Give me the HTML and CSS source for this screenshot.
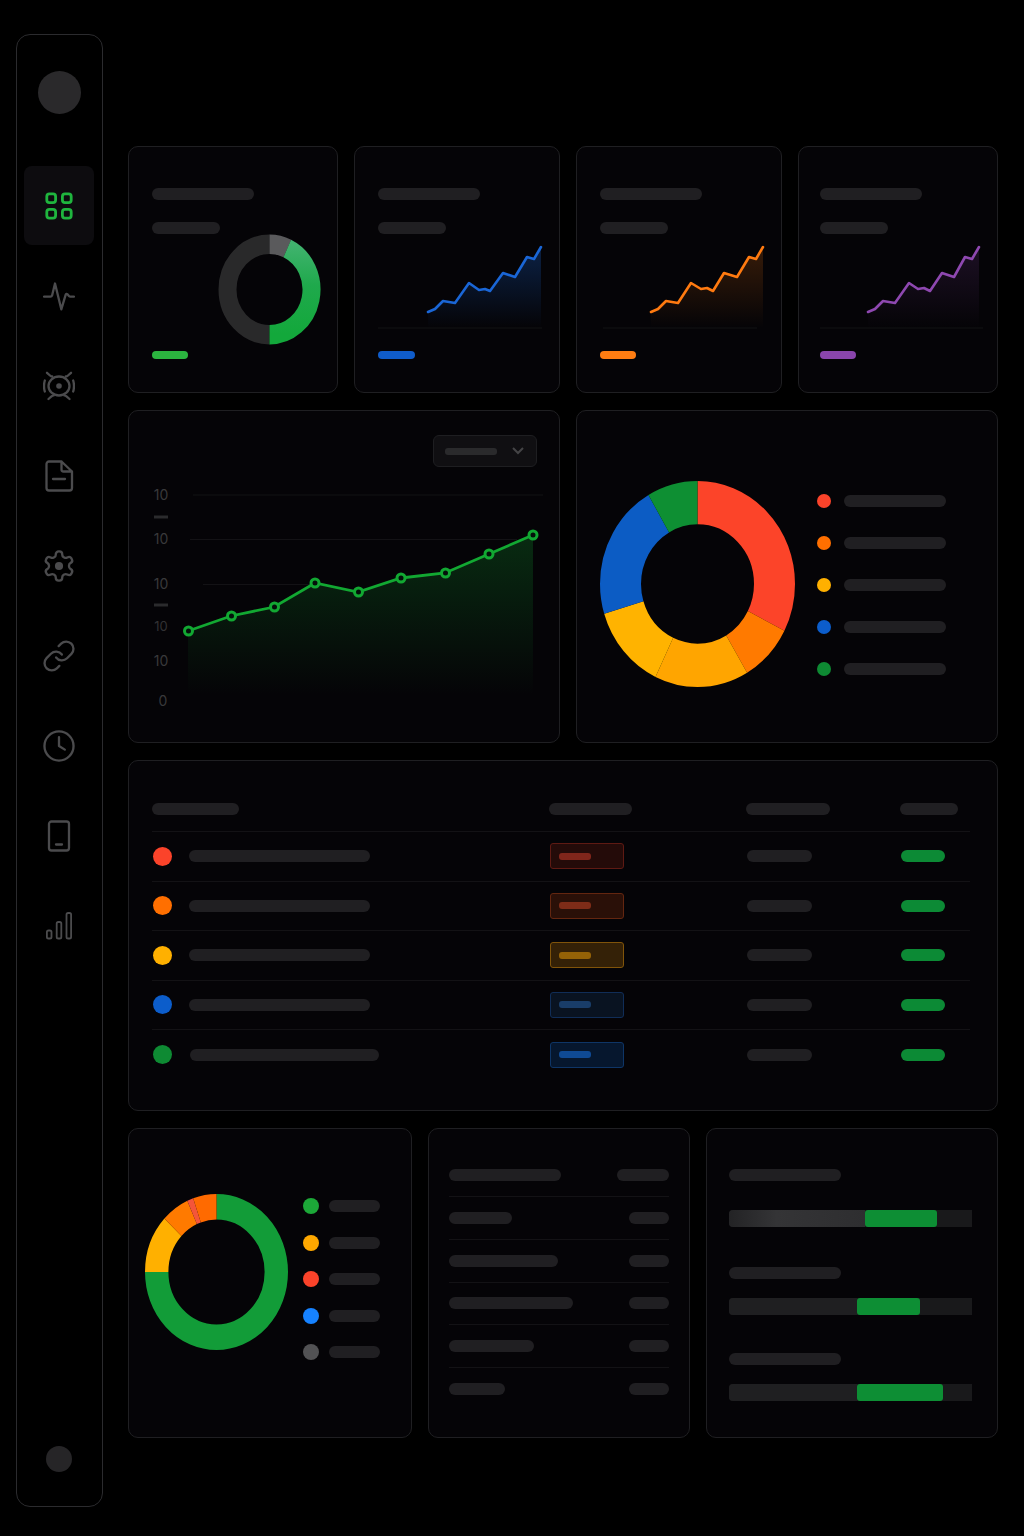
FILE: index.html
```html
<!DOCTYPE html>
<html lang="en">
<head>
    <meta charset="UTF-8">
    <title>Dashboard</title>
    <link rel="stylesheet" href="styles.css">
</head>
<body>

<aside class="sidebar">
    <div class="avatar"></div>
    <nav class="nav">
        <a class="nav-item active">
            <svg class="icon" viewBox="0 0 32 32"><rect x="3.8" y="3.8" width="8.8" height="8.8" rx="2.6"/><rect x="19.4" y="3.8" width="8.8" height="8.8" rx="2.6"/><rect x="3.8" y="19.4" width="8.8" height="8.8" rx="2.6"/><rect x="19.4" y="19.4" width="8.8" height="8.8" rx="2.6"/></svg>
        </a>
        <a class="nav-item">
            <svg class="icon" viewBox="0 0 32 32"><path d="M1 16.6h6.5q1.2 0 1.6-1.2L12 3.5l6.3 25.8 4.4-14.6q.6-1.6 1.8-.4l1.4 1.6q.6.7 1.6.7H31"/></svg>
        </a>
        <a class="nav-item">
            <svg class="icon" viewBox="0 0 32 32"><ellipse cx="16" cy="16" rx="10.500" ry="9.500"/><circle class="solid" cx="16" cy="16" r="2.800"/><path d="M1.800 10.500q-1.600 5.500 0 11M30.200 10.500q1.600 5.500 0 11M4 2.800l3 2.700q1 .9 2.200 1M28 2.800l-3 2.700q-1 .9-2.200 1M5.500 29l3-2.600q.9-.8 2.200-1M26.500 29l-3-2.600q-.9-.8-2.200-1"/></svg>
        </a>
        <a class="nav-item">
            <svg class="icon" viewBox="0 0 32 32"><path d="M6 1.500h12.500L29 11.500V28a2.500 2.500 0 0 1-2.500 2.500H6A2.500 2.500 0 0 1 3.500 28V4A2.500 2.500 0 0 1 6 1.500zM18.500 1.500v8a2 2 0 0 0 2 2H29M10 19h12"/></svg>
        </a>
        <a class="nav-item">
            <svg class="icon" viewBox="1 1 22 22"><path class="thin" d="M12.220 2h-.44a2 2 0 0 0-2 2v.18a2 2 0 0 1-1 1.730l-.43.25a2 2 0 0 1-2 0l-.15-.08a2 2 0 0 0-2.730.73l-.22.38a2 2 0 0 0 .73 2.730l.15.1a2 2 0 0 1 1 1.720v.51a2 2 0 0 1-1 1.740l-.15.09a2 2 0 0 0-.73 2.730l.22.38a2 2 0 0 0 2.730.73l.15-.08a2 2 0 0 1 2 0l.43.25a2 2 0 0 1 1 1.730V20a2 2 0 0 0 2 2h.44a2 2 0 0 0 2-2v-.18a2 2 0 0 1 1-1.730l.43-.25a2 2 0 0 1 2 0l.15.08a2 2 0 0 0 2.730-.73l.22-.39a2 2 0 0 0-.73-2.730l-.15-.08a2 2 0 0 1-1-1.740v-.5a2 2 0 0 1 1-1.740l.15-.09a2 2 0 0 0 .73-2.730l-.22-.38a2 2 0 0 0-2.730-.73l-.15.08a2 2 0 0 1-2 0l-.43-.25a2 2 0 0 1-1-1.730V4a2 2 0 0 0-2-2z"/><circle class="solid" cx="12" cy="12" r="2.800"/></svg>
        </a>
        <a class="nav-item">
            <svg class="icon" viewBox="1 1 22 22"><path class="thin" d="M10 13a5 5 0 0 0 7.540.54l3-3a5 5 0 0 0-7.070-7.070l-1.720 1.710M14 11a5 5 0 0 0-7.540-.54l-3 3a5 5 0 0 0 7.070 7.070l1.710-1.710"/></svg>
        </a>
        <a class="nav-item">
            <svg class="icon" viewBox="1 1 22 22"><circle class="thin" cx="12" cy="12" r="10"/><path class="thin" d="M12 6v6l4 2.500"/></svg>
        </a>
        <a class="nav-item">
            <svg class="icon" viewBox="0 0 32 32"><rect x="6" y="1.500" width="20" height="29" rx="2.500"/><path d="M13 24.500h6"/></svg>
        </a>
        <a class="nav-item">
            <svg class="icon" viewBox="0 0 32 32"><rect class="fine" x="3.900" y="20.500" width="4.600" height="8" rx="1.600"/><rect class="fine" x="13.700" y="12" width="4.600" height="16.500" rx="1.600"/><rect class="fine" x="23.500" y="3" width="4.600" height="25.500" rx="1.600"/></svg>
        </a>
    </nav>
    <div class="footer-dot"></div>
</aside>

<main class="main">

    <section class="row row-stats">
        <div class="card stat">
            <div class="bar title"></div>
            <div class="bar sub"></div>
            <div class="stat-chart">
                <svg class="ring-small" viewBox="0 0 103 103" preserveAspectRatio="none">
                    <defs>
                        <linearGradient id="ringGreen" gradientUnits="userSpaceOnUse" x1="0" y1="10" x2="0" y2="93">
                            <stop offset="0" stop-color="#40b36e"/>
                            <stop offset="0.45" stop-color="#1fa94c"/>
                            <stop offset="1" stop-color="#13a83b"/>
                        </linearGradient>
                    </defs>
                    <circle class="slice" cx="51.500" cy="51.500" r="42" stroke-width="18" stroke="#29292a" pathLength="100" stroke-dasharray="50 100" stroke-dashoffset="-50" transform="rotate(-90 51.500 51.500)"/>
                    <circle class="slice" cx="51.500" cy="51.500" r="42" stroke-width="18" stroke="#5a5a5c" pathLength="100" stroke-dasharray="7 100" transform="rotate(-90 51.500 51.500)"/>
                    <path class="slice" d="M69.250 13.430A42 42 0 0 1 51.500 93.500" stroke-width="18" stroke="url(#ringGreen)"/>
                </svg>
            </div>
            <div class="pill pill-green"></div>
        </div>

        <div class="card stat">
            <div class="bar title"></div>
            <div class="bar sub"></div>
            <div class="stat-chart">
                <svg class="spark" viewBox="378 234 165 111">
                    <defs>
                        <linearGradient id="fadeBlue" x1="0" y1="0" x2="0" y2="1">
                            <stop offset="0" stop-color="#1a66d6" stop-opacity="0.3"/>
                            <stop offset="1" stop-color="#1a66d6" stop-opacity="0"/>
                        </linearGradient>
                    </defs>
                    <path class="baseline" d="M378 328H542"/>
                    <path fill="url(#fadeBlue)" d="M428 312L435 309 443 301 455 303 469 283 479 290 485 289 490 291 503 273 515 277 527 257 534 259 541 247V328H428z"/>
                    <path class="spark-line" stroke="#1a66d6" d="M428 312L435 309 443 301 455 303 469 283 479 290 485 289 490 291 503 273 515 277 527 257 534 259 541 247"/>
                </svg>
            </div>
            <div class="pill pill-blue"></div>
        </div>

        <div class="card stat">
            <div class="bar title"></div>
            <div class="bar sub"></div>
            <div class="stat-chart">
                <svg class="spark" viewBox="600 234 165 111">
                    <defs>
                        <linearGradient id="fadeOrange" x1="0" y1="0" x2="0" y2="1">
                            <stop offset="0" stop-color="#ff7a10" stop-opacity="0.2"/>
                            <stop offset="1" stop-color="#ff7a10" stop-opacity="0"/>
                        </linearGradient>
                    </defs>
                    <path class="baseline" d="M603 328H757"/>
                    <path fill="url(#fadeOrange)" d="M651 312L658 309 666 301 678 303 691 283 701 289 707 288 713 291 724 273 737 277 749 257 756 259 763 247V328H651z"/>
                    <path class="spark-line" stroke="#ff7a10" d="M651 312L658 309 666 301 678 303 691 283 701 289 707 288 713 291 724 273 737 277 749 257 756 259 763 247"/>
                </svg>
            </div>
            <div class="pill pill-orange"></div>
        </div>

        <div class="card stat stat-narrow">
            <div class="bar title"></div>
            <div class="bar sub"></div>
            <div class="stat-chart">
                <svg class="spark" viewBox="820 234 165 111">
                    <defs>
                        <linearGradient id="fadePurple" x1="0" y1="0" x2="0" y2="1">
                            <stop offset="0" stop-color="#8e48b0" stop-opacity="0.17"/>
                            <stop offset="1" stop-color="#8e48b0" stop-opacity="0"/>
                        </linearGradient>
                    </defs>
                    <path class="baseline" d="M820 328H983"/>
                    <path fill="url(#fadePurple)" d="M868 312L875 309 883 301 895 303 909 283 918 289 924 288 930 291 942 273 954 277 965 257 972 259 979 247V328H868z"/>
                    <path class="spark-line" stroke="#8e48b0" d="M868 312L875 309 883 301 895 303 909 283 918 289 924 288 930 291 942 273 954 277 965 257 972 259 979 247"/>
                </svg>
            </div>
            <div class="pill pill-purple"></div>
        </div>
    </section>

    <section class="row row-charts">
        <div class="card trend">
            <div class="trend-head">
                <div class="dropdown">
                    <span class="dropdown-bar"></span>
                    <svg class="chevron" viewBox="0 0 12 8"><path d="M1 1l5 5 5-5"/></svg>
                </div>
            </div>
            <svg class="trend-chart" viewBox="129 475 430 250">
                <defs>
                    <linearGradient id="fadeGreen" gradientUnits="userSpaceOnUse" x1="0" y1="535" x2="0" y2="695">
                        <stop offset="0" stop-color="#12a832" stop-opacity="0.24"/>
                        <stop offset="1" stop-color="#12a832" stop-opacity="0"/>
                    </linearGradient>
                </defs>
                <path class="grid-line" d="M193 495H543M190 539.500H517M203 584.500H320"/>
                <g class="axis">
                    <text x="161" y="500">10</text>
                    <text x="161" y="544">10</text>
                    <text x="161" y="589">10</text>
                    <text class="axis-faint" x="161" y="631">10</text>
                    <text x="161" y="666">10</text>
                    <text x="163" y="706">0</text>
                </g>
                <path class="axis-dash" d="M154 517h14M154 605h14"/>
                <path fill="url(#fadeGreen)" d="M188 631L231 616 274 607 315 583 358 592 401 578 445 573 489 554 533 535V695H188z"/>
                <path class="trend-line" d="M188 631L231 616 274 607 315 583 358 592 401 578 445 573 489 554 533 535"/>
                <g class="trend-points">
                    <circle cx="188.500" cy="631" r="4"/>
                    <circle cx="231.500" cy="616" r="4"/>
                    <circle cx="274.500" cy="607" r="4"/>
                    <circle cx="315" cy="583" r="4"/>
                    <circle cx="358.500" cy="592" r="4"/>
                    <circle cx="401" cy="578" r="4"/>
                    <circle cx="445.500" cy="573" r="4"/>
                    <circle cx="489" cy="554" r="4"/>
                    <circle cx="533" cy="535" r="4"/>
                </g>
            </svg>
        </div>

        <div class="card breakdown">
            <svg class="ring-large" viewBox="0 0 195 195" preserveAspectRatio="none">
                <g transform="rotate(-90 97.500 97.500)">
                    <circle class="slice" cx="97.500" cy="97.500" r="77" stroke-width="41" stroke="#fc4429" pathLength="100" stroke-dasharray="32.500 100"/>
                    <circle class="slice" cx="97.500" cy="97.500" r="77" stroke-width="41" stroke="#ff7a00" pathLength="100" stroke-dasharray="9 100" stroke-dashoffset="-32.500"/>
                    <circle class="slice" cx="97.500" cy="97.500" r="77" stroke-width="41" stroke="#ffa500" pathLength="100" stroke-dasharray="15.600 100" stroke-dashoffset="-41.500"/>
                    <circle class="slice" cx="97.500" cy="97.500" r="77" stroke-width="41" stroke="#ffb300" pathLength="100" stroke-dasharray="13.200 100" stroke-dashoffset="-57.100"/>
                    <circle class="slice" cx="97.500" cy="97.500" r="77" stroke-width="41" stroke="#0c5cc4" pathLength="100" stroke-dasharray="21.300 100" stroke-dashoffset="-70.300"/>
                    <circle class="slice" cx="97.500" cy="97.500" r="77" stroke-width="41" stroke="#0e8f33" pathLength="100" stroke-dasharray="8.400 100" stroke-dashoffset="-91.600"/>
                </g>
            </svg>
            <ul class="legend legend-large">
                <li class="legend-item"><span class="dot dot-red"></span><span class="bar"></span></li>
                <li class="legend-item"><span class="dot dot-orange"></span><span class="bar"></span></li>
                <li class="legend-item"><span class="dot dot-yellow"></span><span class="bar"></span></li>
                <li class="legend-item"><span class="dot dot-blue"></span><span class="bar"></span></li>
                <li class="legend-item"><span class="dot dot-green"></span><span class="bar"></span></li>
            </ul>
        </div>
    </section>

    <section class="card table">
        <div class="table-head">
            <span class="bar head-a"></span>
            <span class="bar head-b"></span>
            <span class="bar head-c"></span>
            <span class="bar head-d"></span>
        </div>
        <div class="table-row">
            <div class="name"><span class="dot dot-red"></span><span class="bar name-bar"></span></div>
            <div class="cell"><span class="badge badge-red"><i></i></span></div>
            <div class="cell"><span class="bar value-bar"></span></div>
            <div class="cell"><span class="pill status"></span></div>
        </div>
        <div class="table-row">
            <div class="name"><span class="dot dot-orange"></span><span class="bar name-bar"></span></div>
            <div class="cell"><span class="badge badge-orange"><i></i></span></div>
            <div class="cell"><span class="bar value-bar"></span></div>
            <div class="cell"><span class="pill status"></span></div>
        </div>
        <div class="table-row">
            <div class="name"><span class="dot dot-yellow"></span><span class="bar name-bar"></span></div>
            <div class="cell"><span class="badge badge-amber"><i></i></span></div>
            <div class="cell"><span class="bar value-bar"></span></div>
            <div class="cell"><span class="pill status"></span></div>
        </div>
        <div class="table-row">
            <div class="name"><span class="dot dot-blue"></span><span class="bar name-bar"></span></div>
            <div class="cell"><span class="badge badge-navy"><i></i></span></div>
            <div class="cell"><span class="bar value-bar"></span></div>
            <div class="cell"><span class="pill status"></span></div>
        </div>
        <div class="table-row">
            <div class="name"><span class="dot dot-green"></span><span class="bar name-bar name-wide"></span></div>
            <div class="cell"><span class="badge badge-blue"><i></i></span></div>
            <div class="cell"><span class="bar value-bar"></span></div>
            <div class="cell"><span class="pill status"></span></div>
        </div>
    </section>

    <section class="row row-bottom">
        <div class="card share">
            <svg class="ring-medium" viewBox="0 0 143 143" preserveAspectRatio="none">
                <g transform="rotate(-90 71.500 71.500)">
                    <circle class="slice" cx="71.500" cy="71.500" r="59.800" stroke-width="23.400" stroke="#129c38" pathLength="100" stroke-dasharray="75 100"/>
                    <circle class="slice" cx="71.500" cy="71.500" r="59.800" stroke-width="23.400" stroke="#ffb000" pathLength="100" stroke-dasharray="12 100" stroke-dashoffset="-75"/>
                    <circle class="slice" cx="71.500" cy="71.500" r="59.800" stroke-width="23.400" stroke="#ff7a00" pathLength="100" stroke-dasharray="6.300 100" stroke-dashoffset="-87"/>
                    <circle class="slice" cx="71.500" cy="71.500" r="59.800" stroke-width="23.400" stroke="#f4553a" pathLength="100" stroke-dasharray="1.400 100" stroke-dashoffset="-93.300"/>
                    <circle class="slice" cx="71.500" cy="71.500" r="59.800" stroke-width="23.400" stroke="#ff6a00" pathLength="100" stroke-dasharray="5.300 100" stroke-dashoffset="-94.700"/>
                </g>
            </svg>
            <ul class="legend legend-small">
                <li class="legend-item"><span class="dot dot-lime"></span><span class="bar"></span></li>
                <li class="legend-item"><span class="dot dot-amber"></span><span class="bar"></span></li>
                <li class="legend-item"><span class="dot dot-red"></span><span class="bar"></span></li>
                <li class="legend-item"><span class="dot dot-sky"></span><span class="bar"></span></li>
                <li class="legend-item"><span class="dot dot-grey"></span><span class="bar"></span></li>
            </ul>
        </div>

        <div class="card list">
            <div class="list-head"><span class="bar list-title"></span><span class="bar list-total"></span></div>
            <div class="list-row"><span class="bar len-1"></span><span class="bar list-value"></span></div>
            <div class="list-row"><span class="bar len-2"></span><span class="bar list-value"></span></div>
            <div class="list-row"><span class="bar len-3"></span><span class="bar list-value"></span></div>
            <div class="list-row"><span class="bar len-4"></span><span class="bar list-value"></span></div>
            <div class="list-row"><span class="bar len-5"></span><span class="bar list-value"></span></div>
        </div>

        <div class="card progress">
            <div class="bar progress-title"></div>
            <div class="track track-bright">
                <span class="track-start" style="width: 136px"></span>
                <span class="track-fill" style="width: 72px"></span>
            </div>
            <div class="bar progress-title second"></div>
            <div class="track">
                <span class="track-start" style="width: 128px"></span>
                <span class="track-fill" style="width: 63px"></span>
            </div>
            <div class="bar progress-title third"></div>
            <div class="track">
                <span class="track-start" style="width: 128px"></span>
                <span class="track-fill" style="width: 86px"></span>
            </div>
        </div>
    </section>

</main>

</body>
</html>
```

FILE: styles.css
```css
* {
    box-sizing: border-box;
}
body {
    margin: 0;
    width: 1024px;
    height: 1536px;
    padding: 34px 0 0 16px;
    display: flex;
    align-items: flex-start;
    gap: 25px;
    background: #000;
    font-family: Inter, "Liberation Sans", sans-serif;
}

/* sidebar */
.sidebar {
    width: 87px;
    height: 1473px;
    padding: 36px 1px 34px 0;
    display: flex;
    flex-direction: column;
    align-items: center;
    border: 1px solid #2b2b2e;
    border-radius: 14px;
}
.avatar {
    width: 43px;
    height: 43px;
    border-radius: 50%;
    background: #2a292b;
}
.nav {
    flex: 1;
    margin-top: 52px;
    display: flex;
    flex-direction: column;
    gap: 11px;
}
.nav-item {
    width: 70px;
    height: 79px;
    display: flex;
    align-items: center;
    justify-content: center;
    border-radius: 8px;
}
.nav-item.active {
    background: #0d0c0f;
}
.icon {
    width: 32px;
    height: 32px;
    fill: none;
    stroke: #4b4b4d;
    stroke-width: 2.3;
    stroke-linecap: round;
    stroke-linejoin: round;
}
.icon .thin {
    stroke-width: 1.6;
}
.icon .fine {
    stroke-width: 1.8;
}
.icon .solid {
    fill: #4b4b4d;
    stroke: none;
}
.active .icon {
    stroke: #1fb53e;
    stroke-width: 2.8;
}
.footer-dot {
    width: 26px;
    height: 26px;
    border-radius: 50%;
    background: #262527;
}

/* shared pieces */
.main {
    width: 870px;
    padding-top: 112px;
    display: flex;
    flex-direction: column;
    gap: 17px;
}
.row {
    display: grid;
    gap: 16px;
}
.row-stats {
    grid-template-columns: 210px 206px 206px 200px;
    height: 247px;
}
.row-charts {
    grid-template-columns: 432px 422px;
    height: 333px;
}
.row-bottom {
    grid-template-columns: 284px 262px 292px;
    height: 310px;
}
.card {
    background: #050407;
    border: 1px solid #1f1f22;
    border-radius: 10px;
}
.bar {
    display: block;
    height: 12px;
    border-radius: 6px;
    background: #201f22;
}
.pill {
    display: block;
    height: 8px;
    border-radius: 4px;
}
.pill-green { width: 36px; background: #2bb53f; }
.pill-blue { width: 37px; background: #0f5cca; }
.pill-orange { width: 36px; background: #ff7d12; }
.pill-purple { width: 36px; background: #8a45ac; }
.slice {
    fill: none;
}
.dot {
    flex: none;
    border-radius: 50%;
}
.dot-red { background: #fb432a; }
.dot-orange { background: #ff6f00; }
.dot-yellow { background: #ffb000; }
.dot-blue { background: #0c5dcb; }
.dot-green { background: #0e8a33; }
.dot-lime { background: #1ca838; }
.dot-amber { background: #ffa800; }
.dot-sky { background: #1682ff; }
.dot-grey { background: #525254; }
.legend {
    margin: 0;
    padding: 0;
    list-style: none;
    display: flex;
    flex-direction: column;
}
.legend-item {
    display: flex;
    align-items: center;
}

/* stat cards */
.stat {
    padding: 41px 16px 0 23px;
}
.stat-narrow {
    padding: 41px 12px 0 21px;
}
.title {
    width: 102px;
}
.sub {
    width: 68px;
    margin-top: 22px;
}
.stat-chart {
    height: 111px;
    display: flex;
    justify-content: flex-end;
}
.stat .pill {
    margin-top: 6px;
}
.ring-small {
    width: 103px;
    height: 111px;
}
.spark {
    width: 165px;
    height: 111px;
    overflow: visible;
}
.baseline {
    stroke: #131215;
    fill: none;
}
.spark-line {
    fill: none;
    stroke-width: 2.600;
    stroke-linejoin: round;
    stroke-linecap: round;
}

/* trend chart */
.trend-head {
    padding: 24px 22px 0 0;
    display: flex;
    justify-content: flex-end;
}
.dropdown {
    width: 104px;
    height: 32px;
    padding: 0 12px 0 11px;
    display: flex;
    align-items: center;
    justify-content: space-between;
    background: #100f12;
    border: 1px solid #1e1e21;
    border-radius: 6px;
}
.dropdown-bar {
    width: 52px;
    height: 7px;
    border-radius: 3px;
    background: #2a2a2c;
}
.chevron {
    width: 12px;
    height: 8px;
    fill: none;
    stroke: #444446;
    stroke-width: 2;
}
.trend-chart {
    display: block;
    width: 430px;
    height: 250px;
    margin-top: 8px;
}
.grid-line {
    stroke: #131215;
    fill: none;
}
.axis text {
    fill: #39393b;
    font-size: 14px;
    text-anchor: middle;
}
.axis .axis-faint {
    fill: #323234;
    font-size: 13px;
}
.axis-dash {
    stroke: #2b2b2d;
    stroke-width: 3;
    fill: none;
}
.trend-line {
    fill: none;
    stroke: #12a832;
    stroke-width: 2.800;
}
.trend-points circle {
    fill: #04100a;
    stroke: #12a832;
    stroke-width: 3;
}

/* breakdown */
.breakdown {
    padding: 70px 0 55px 23px;
    display: flex;
    align-items: center;
    gap: 22px;
}
.ring-large {
    flex: none;
    width: 195px;
    height: 206px;
}
.legend-large {
    padding-top: 2px;
    gap: 28px;
}
.legend-large .dot {
    width: 14px;
    height: 14px;
}
.legend-large .bar {
    width: 102px;
    margin-left: 13px;
}

/* table */
.table {
    height: 351px;
    padding: 42px 27px 0 23px;
}
.table-head,
.table-row {
    display: grid;
    grid-template-columns: 397px 197px 154px 1fr;
    align-items: center;
}
.table-head {
    padding-bottom: 16px;
    border-bottom: 1px solid #131215;
}
.head-a { width: 87px; }
.head-b { width: 83px; }
.head-c { width: 84px; }
.head-d { width: 58px; }
.table-row {
    height: 49.500px;
    border-bottom: 1px solid #131215;
}
.table-row:last-child {
    border-bottom: none;
}
.name {
    padding-left: 1px;
    display: flex;
    align-items: center;
    gap: 17px;
}
.name .dot {
    width: 19px;
    height: 19px;
}
.name-bar {
    width: 181px;
}
.name-wide {
    width: 189px;
    margin-left: 1px;
}
.cell {
    padding-left: 1px;
}
.badge {
    width: 74px;
    height: 26px;
    padding-left: 8px;
    display: flex;
    align-items: center;
    border: 1px solid;
    border-radius: 3px;
}
.badge i {
    display: block;
    width: 32px;
    height: 7px;
    border-radius: 3px;
}
.badge-red { background: #240b09; border-color: #5e1a13; }
.badge-red i { background: #80261b; }
.badge-orange { background: #2a1008; border-color: #632610; }
.badge-orange i { background: #7e2c18; }
.badge-amber { background: #342107; border-color: #80540a; }
.badge-amber i { background: #946207; }
.badge-navy { background: #091321; border-color: #102d57; }
.badge-navy i { background: #193d69; }
.badge-blue { background: #06172e; border-color: #0e3566; }
.badge-blue i { background: #0f4a94; }
.value-bar {
    width: 65px;
}
.status {
    width: 44px;
    height: 12px;
    border-radius: 6px;
    background: #0c8a35;
}

/* bottom row */
.share {
    padding: 65px 0 0 16px;
    display: flex;
    align-items: flex-start;
    gap: 15px;
}
.ring-medium {
    flex: none;
    width: 143px;
    height: 156px;
}
.legend-small {
    padding-top: 4px;
    gap: 20.600px;
}
.legend-small .dot {
    width: 16px;
    height: 16px;
}
.legend-small .bar {
    width: 51px;
    margin-left: 10px;
}
.list {
    padding: 40px 20px 0;
}
.list-head {
    display: flex;
    justify-content: space-between;
    padding-bottom: 15px;
    border-bottom: 1px solid #131215;
}
.list-title { width: 112px; }
.list-total { width: 52px; }
.list-row {
    height: 42.750px;
    display: flex;
    align-items: center;
    justify-content: space-between;
    border-bottom: 1px solid #131215;
}
.list-row:last-child {
    border-bottom: none;
}
.list-value { width: 40px; }
.len-1 { width: 63px; }
.len-2 { width: 109px; }
.len-3 { width: 124px; }
.len-4 { width: 85px; }
.len-5 { width: 56px; }
.progress {
    padding: 40px 25px 0 22px;
}
.progress-title {
    width: 112px;
}
.progress-title.second {
    margin-top: 40px;
}
.progress-title.third {
    margin-top: 38px;
}
.track {
    height: 17px;
    margin-top: 19px;
    display: flex;
    background: #19191b;
    border-radius: 4px 0 0 4px;
}
.track-bright {
    margin-top: 29px;
}
.track-start {
    background: #1f1f21;
    border-radius: 4px 0 0 4px;
}
.track-bright .track-start {
    background: linear-gradient(90deg, #232325, #343436 35%, #2e2e30);
}
.track-fill {
    background: #0d8e34;
    border-radius: 3px;
}
```
